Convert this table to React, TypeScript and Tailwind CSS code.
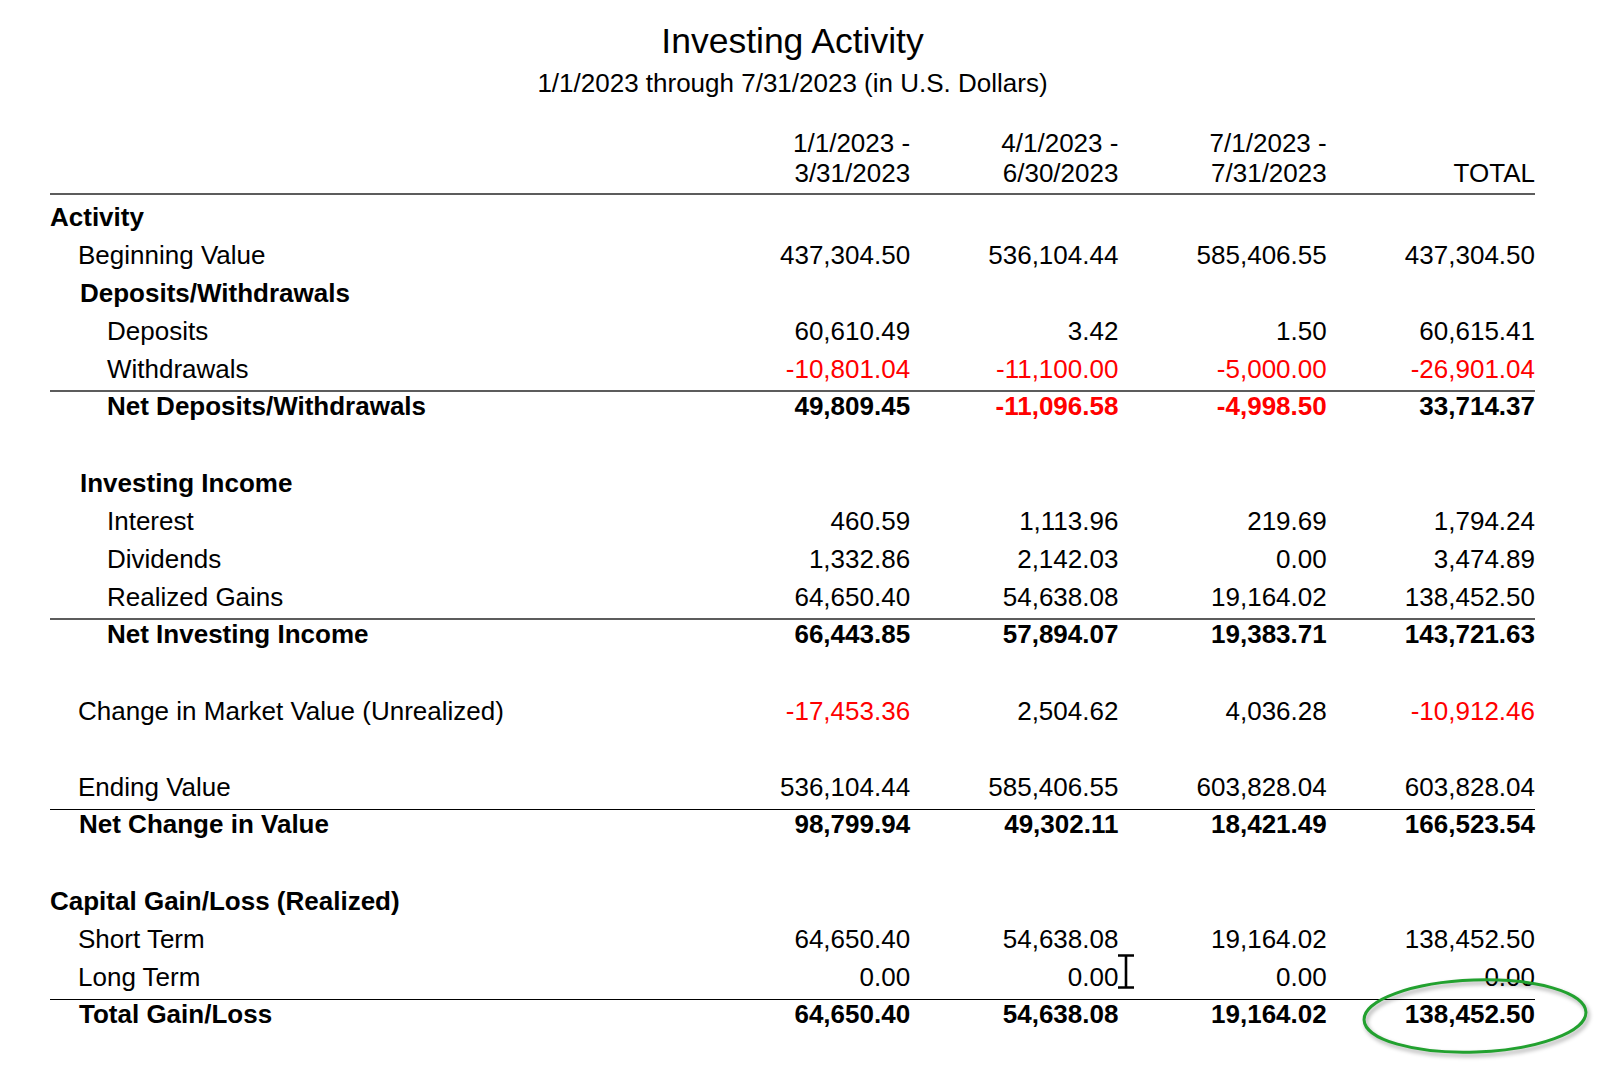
import React from "react";

type Row =
  | { kind: "blank" }
  | {
      kind: "row" | "sum";
      label: string;
      indent: string;
      bold?: boolean;
      values?: string[];
      thinLine?: boolean;
    };

const rows: Row[] = [
  { kind: "row", label: "Activity", indent: "pl-0", bold: true },
  { kind: "row", label: "Beginning Value", indent: "pl-[28px]", values: ["437,304.50", "536,104.44", "585,406.55", "437,304.50"] },
  { kind: "row", label: "Deposits/Withdrawals", indent: "pl-[30px]", bold: true },
  { kind: "row", label: "Deposits", indent: "pl-[57px]", values: ["60,610.49", "3.42", "1.50", "60,615.41"] },
  { kind: "row", label: "Withdrawals", indent: "pl-[57px]", values: ["-10,801.04", "-11,100.00", "-5,000.00", "-26,901.04"] },
  { kind: "sum", label: "Net Deposits/Withdrawals", indent: "pl-[57px]", bold: true, values: ["49,809.45", "-11,096.58", "-4,998.50", "33,714.37"] },
  { kind: "blank" },
  { kind: "row", label: "Investing Income", indent: "pl-[30px]", bold: true },
  { kind: "row", label: "Interest", indent: "pl-[57px]", values: ["460.59", "1,113.96", "219.69", "1,794.24"] },
  { kind: "row", label: "Dividends", indent: "pl-[57px]", values: ["1,332.86", "2,142.03", "0.00", "3,474.89"] },
  { kind: "row", label: "Realized Gains", indent: "pl-[57px]", values: ["64,650.40", "54,638.08", "19,164.02", "138,452.50"] },
  { kind: "sum", label: "Net Investing Income", indent: "pl-[57px]", bold: true, values: ["66,443.85", "57,894.07", "19,383.71", "143,721.63"] },
  { kind: "blank" },
  { kind: "row", label: "Change in Market Value (Unrealized)", indent: "pl-[28px]", values: ["-17,453.36", "2,504.62", "4,036.28", "-10,912.46"] },
  { kind: "blank" },
  { kind: "row", label: "Ending Value", indent: "pl-[28px]", values: ["536,104.44", "585,406.55", "603,828.04", "603,828.04"] },
  { kind: "sum", label: "Net Change in Value", indent: "pl-[29px]", bold: true, thinLine: true, values: ["98,799.94", "49,302.11", "18,421.49", "166,523.54"] },
  { kind: "blank" },
  { kind: "row", label: "Capital Gain/Loss (Realized)", indent: "pl-0", bold: true },
  { kind: "row", label: "Short Term", indent: "pl-[28px]", values: ["64,650.40", "54,638.08", "19,164.02", "138,452.50"] },
  { kind: "row", label: "Long Term", indent: "pl-[28px]", values: ["0.00", "0.00", "0.00", "0.00"] },
  { kind: "sum", label: "Total Gain/Loss", indent: "pl-[29px]", bold: true, thinLine: true, values: ["64,650.40", "54,638.08", "19,164.02", "138,452.50"] },
];

function Cells({ values, leading }: { values?: string[]; leading: string }) {
  return (
    <>
      {[0, 1, 2, 3].map((i) => {
        const v = values?.[i] ?? "";
        return (
          <div
            key={i}
            className={`w-[208.3px] shrink-0 text-right ${leading} ${v.startsWith("-") ? "text-[#ff0000]" : ""}`}
          >
            {v}
          </div>
        );
      })}
    </>
  );
}

function ReportRow({ row }: { row: Row }) {
  if (row.kind === "blank") return <div className="h-[38px]" />;

  if (row.kind === "sum") {
    // line sits 2.5px into the row, text baseline stays on the 38px grid
    return (
      <div
        className={`flex items-start font-bold ${
          row.thinLine
            ? "mt-[3.5px] h-[34.5px] border-t border-black"
            : "mt-[2.5px] h-[35.5px] border-t-2 border-[#5c5c5c]"
        }`}
      >
        <div className={`flex-1 leading-[29px] ${row.indent}`}>{row.label}</div>
        <Cells values={row.values} leading="leading-[29px]" />
      </div>
    );
  }

  return (
    <div className={`flex h-[38px] ${row.bold ? "font-bold" : ""}`}>
      <div className={`flex-1 leading-[38px] ${row.indent}`}>{row.label}</div>
      <Cells values={row.values} leading="leading-[38px]" />
    </div>
  );
}

export default function App() {
  return (
    <div className="relative min-h-screen bg-white font-['Liberation_Sans',Arial,sans-serif] text-[26px] text-black">
      <div className="ml-[50px] w-[1485px] pt-[21px]">
        <h1 className="text-center text-[35.5px] leading-[40px]">Investing Activity</h1>
        <p className="mt-[7px] text-center leading-[30px]">1/1/2023 through 7/31/2023 (in U.S. Dollars)</p>

        {/* column headers */}
        <div className="mt-[30.3px] flex leading-[30px]">
          <div className="flex-1" />
          <div className="w-[208.3px] text-right">
            1/1/2023 -<br />3/31/2023
          </div>
          <div className="w-[208.3px] text-right">
            4/1/2023 -<br />6/30/2023
          </div>
          <div className="w-[208.3px] text-right">
            7/1/2023 -<br />7/31/2023
          </div>
          <div className="flex w-[208.3px] flex-col justify-end text-right">TOTAL</div>
        </div>
        <div className="mt-[5px] border-t-2 border-[#5c5c5c]" />

        <div className="mt-[2.4px]">
          {rows.map((r, i) => (
            <ReportRow key={i} row={r} />
          ))}
        </div>
      </div>

      {/* text cursor */}
      <svg className="absolute left-[1116px] top-[953px]" width="20" height="37" viewBox="0 0 20 37">
        <path d="M2 2.5 H18 M2 34.5 H18 M10 2.5 V34.5" stroke="#000" strokeWidth="2.6" fill="none" />
      </svg>

      {/* highlight ellipse */}
      <svg
        className="absolute left-[1355px] top-[972px] drop-shadow-[2px_3px_2px_rgba(0,0,0,0.35)]"
        width="242"
        height="92"
        viewBox="0 0 242 92"
      >
        <ellipse
          cx="120"
          cy="44"
          rx="111"
          ry="36"
          fill="none"
          stroke="#22a12f"
          strokeWidth="3"
          transform="rotate(-2 120 44)"
        />
      </svg>
    </div>
  );
}
